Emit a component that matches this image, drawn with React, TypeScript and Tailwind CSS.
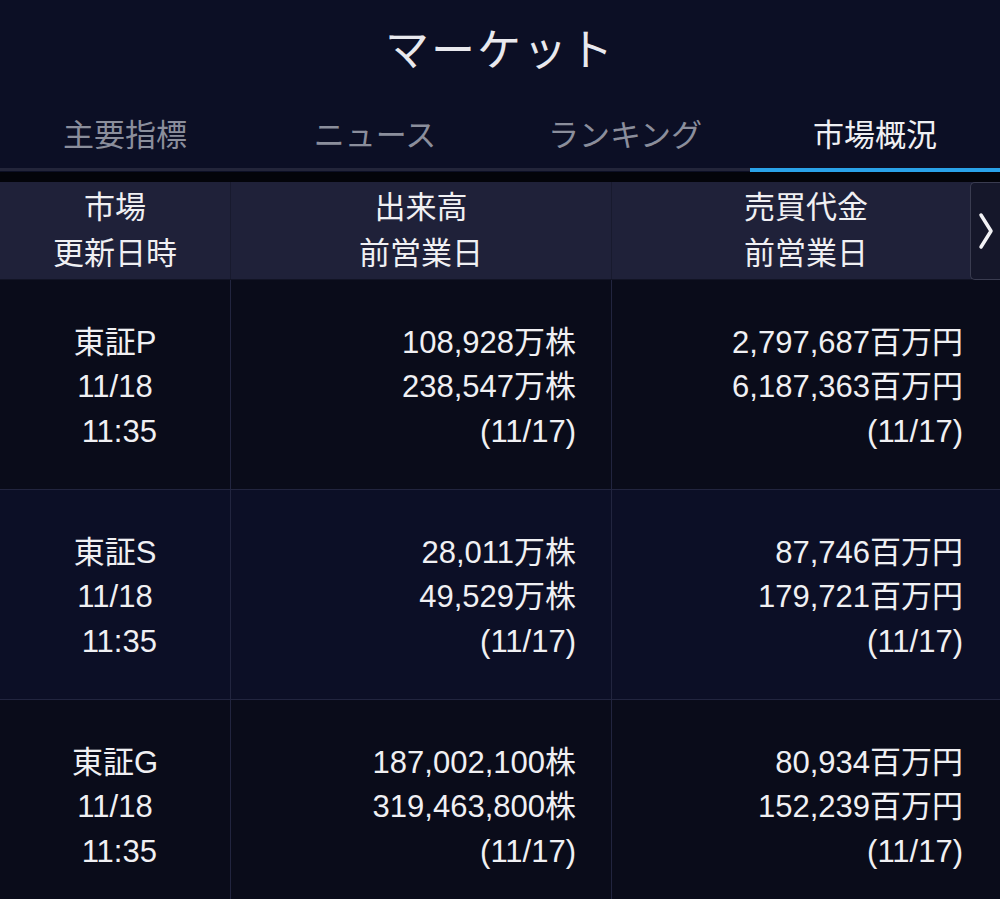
const tabs = ["主要指標", "ニュース", "ランキング", "市場概況"];

const markets = [
  {
    name: "東証P",
    volume: ["108,928万株", "238,547万株"],
    value: ["2,797,687百万円", "6,187,363百万円"],
    bg: "bg-[#0a0c1a]",
  },
  {
    name: "東証S",
    volume: ["28,011万株", "49,529万株"],
    value: ["87,746百万円", "179,721百万円"],
    bg: "bg-[#0c0f26]",
  },
  {
    name: "東証G",
    volume: ["187,002,100株", "319,463,800株"],
    value: ["80,934百万円", "152,239百万円"],
    bg: "bg-[#0a0c1a]",
  },
];

const ChevronRight = () => (
  <svg width="16" height="38" viewBox="0 0 16 38" fill="none">
    <path d="M3 3 L13 19 L3 35" stroke="#f2f2f5" strokeWidth="3.5" strokeLinecap="round" strokeLinejoin="round" />
  </svg>
);

const App = () => {
  return (
    <div className="w-[1000px] h-[899px] overflow-hidden bg-[#0c0f25] text-[#f0f0f3] font-['Liberation_Sans','Noto_Sans_CJK_JP',sans-serif]">
      <div className="h-[96px] pt-[6px] flex items-center justify-center text-[44px] tracking-[2px] text-[#e9e9ee]">
        マーケット
      </div>

      <div className="h-[76px] flex">
        {tabs.map((tab, i) => (
          <div
            key={tab}
            className={
              i === 3
                ? "flex-1 flex items-center justify-center pt-[9px] text-[31px] text-[#f0f0f3] border-b-4 border-[#2aa2e8]"
                : "flex-1 flex items-center justify-center pt-[9px] text-[31px] text-[#8b8e9c] border-b-[3px] border-[#23253a] mb-px"
            }
          >
            {tab}
          </div>
        ))}
      </div>

      <div className="h-[10px] bg-[#03040a]" />

      <div className="relative h-[98px] grid grid-cols-[231px_381px_1fr] bg-[#1f2139] border-b border-[#121425] text-[31px] leading-[46px]">
        <div className="flex flex-col items-center justify-center border-r border-[#181a2e]">
          <span>市場</span>
          <span>更新日時</span>
        </div>
        <div className="flex flex-col items-center justify-center border-r border-[#181a2e]">
          <span>出来高</span>
          <span>前営業日</span>
        </div>
        <div className="flex flex-col items-center justify-center">
          <span>売買代金</span>
          <span>前営業日</span>
        </div>
        <div className="absolute right-0 top-0 h-[98px] w-[30px] flex items-center justify-center bg-[#15172a] border border-r-0 border-[#3a3c50] rounded-l-[5px]">
          <ChevronRight />
        </div>
      </div>

      {markets.map((m) => (
        <div
          key={m.name}
          className={`h-[210px] grid grid-cols-[231px_381px_1fr] border-b border-[#22253f] text-[31px] leading-[44.5px] ${m.bg}`}
        >
          <div className="flex flex-col items-center justify-center pt-[6px] border-r border-[#22253f]">
            <span>{m.name}</span>
            <span>11/18</span>
            <span className="whitespace-pre"> 11:35</span>
          </div>
          <div className="flex flex-col items-end justify-center pt-[6px] pr-[35px] border-r border-[#22253f]">
            <span>{m.volume[0]}</span>
            <span>{m.volume[1]}</span>
            <span>(11/17)</span>
          </div>
          <div className="flex flex-col items-end justify-center pt-[6px] pr-[37px]">
            <span>{m.value[0]}</span>
            <span>{m.value[1]}</span>
            <span>(11/17)</span>
          </div>
        </div>
      ))}
    </div>
  );
};

export default App;
